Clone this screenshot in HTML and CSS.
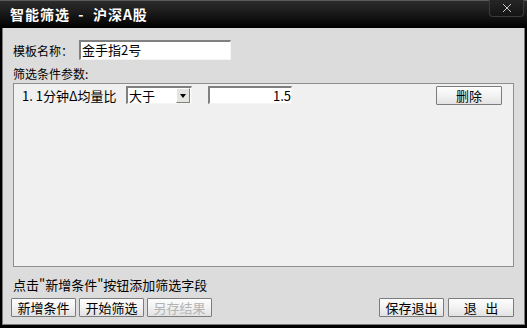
FILE: index.html
```html
<!DOCTYPE html>
<html lang="zh">
<head>
    <meta charset="UTF-8">
    <title>智能筛选 - 沪深A股</title>
    <link rel="stylesheet" href="styles.css">
</head>
<body>
    <div class="window">
        <div class="titlebar">
            <span class="title">智能筛选 &nbsp;- &nbsp;沪深A股</span>
            <div class="close-btn">
                <svg width="10" height="10" viewBox="0 0 10 10"><path d="M1 1 L9 9 M9 1 L1 9" stroke="#c8c8c8" stroke-width="1"/></svg>
            </div>
        </div>
        <div class="client">
            <div class="name-row">
                <span class="name-label">模板名称：</span>
                <div class="textbox name-box">金手指2号</div>
            </div>
            <div class="section-label">筛选条件参数:</div>
            <div class="panel">
                <div class="cond-row">
                    <span class="cond-name">1. 1分钟Δ均量比</span>
                    <div class="combo">
                        <span class="combo-text">大于</span>
                        <span class="combo-arrow"></span>
                    </div>
                    <div class="textbox value-box">1.5</div>
                    <button class="btn del-btn">删除</button>
                </div>
            </div>
            <div class="hint">点击"新增条件"按钮添加筛选字段</div>
            <div class="btn-row">
                <button class="btn">新增条件</button>
                <button class="btn">开始筛选</button>
                <button class="btn disabled">另存结果</button>
                <div class="spacer"></div>
                <button class="btn">保存退出</button>
                <button class="btn">退&nbsp;&nbsp;&nbsp;出</button>
            </div>
        </div>
    </div>
</body>
</html>
```

FILE: styles.css
```css
body { margin: 0; background: #000; font-family: "Noto Sans CJK SC", "DejaVu Sans", sans-serif; font-size: 12px; color: #000; }
.window { width: 527px; height: 328px; background: #000; display: flex; flex-direction: column; padding: 0 2px 3px 2px; box-sizing: border-box; }
.titlebar { height: 28px; flex: none; margin: 0 -2px; display: flex; align-items: flex-start; border-top: 1px solid #5a5a5a; box-sizing: border-box; background: linear-gradient(#2c2c2c, #1c1c1c 40%, #000); }
.title { color: #fff; font-weight: bold; font-size: 14px; line-height: 14px; margin: 6px 0 0 10px; letter-spacing: 1px; }
.close-btn { margin-left: auto; margin-right: 3px; margin-top: -1px; width: 35px; height: 17px; box-sizing: border-box; border: 1px solid #3c3c3c; border-top: none; border-radius: 0 0 4px 4px; background: linear-gradient(#262626, #141414); display: flex; align-items: center; justify-content: center; }
.client { flex: 1; background: #dcdcdc; border: 1px solid #7a7a7a; border-top: none; display: flex; flex-direction: column; padding: 12px 10px 6px 10px; }
.name-row { display: flex; align-items: center; height: 20px; }
.name-label { width: 66px; }
.textbox { background: #fff; box-sizing: border-box; border-style: solid; border-width: 2px 1px 1px 2px; border-color: #808080 #f4f4f0 #f4f4f0 #808080; line-height: 15px; overflow: hidden; white-space: nowrap; }
.name-box { width: 152px; height: 20px; padding-left: 1px; font-size: 13px; }
.section-label { margin-top: 6px; line-height: 16px; }
.panel { margin-top: 1px; height: 184px; box-sizing: border-box; border: 1px solid #8e8e8e; background: #f0f0f0; padding: 2px 0 0 8px; }
.cond-row { display: flex; align-items: flex-start; height: 19px; }
.cond-name { width: 104px; line-height: 19px; font-size: 13px; }
.combo { width: 66px; height: 18px; box-sizing: border-box; display: flex; background: #fff; border-style: solid; border-width: 2px 1px 1px 2px; border-color: #808080 #f4f4f0 #f4f4f0 #808080; }
.combo-text { flex: 1; line-height: 15px; padding-left: 1px; font-size: 13px; }
.combo-arrow { width: 14px; height: 15px; margin: 0 1px 0 0; box-sizing: border-box; border: 1px solid; border-color: #fff #808080 #808080 #fff; background: #e4e4e0; position: relative; }
.combo-arrow::after { content: ""; position: absolute; left: 3px; top: 5px; border-left: 3.5px solid transparent; border-right: 3.5px solid transparent; border-top: 4px solid #000; }
.value-box { width: 84px; height: 18px; margin-left: 16px; text-align: right; padding-right: 0; font-size: 13px; }
.btn { width: 65px; height: 19px; padding: 0; box-sizing: border-box; font-family: inherit; font-size: 13px; line-height: 15px; color: #000; border: 1px solid #7c7c7c; border-radius: 1px; background: linear-gradient(#fdfdfd, #f2f2f2 50%, #e2e2e2); }
.del-btn { margin-left: 144px; width: 66px; }
.btn.disabled { color: #b4b4b4; }
.hint { margin-top: 10px; line-height: 16px; font-size: 13px; }
.btn-row { margin: 5px 0 0 -2px; display: flex; gap: 3px; }
.spacer { flex: 1; }
.btn-row .btn:last-child { margin-left: 1px; width: 66px; }
```
